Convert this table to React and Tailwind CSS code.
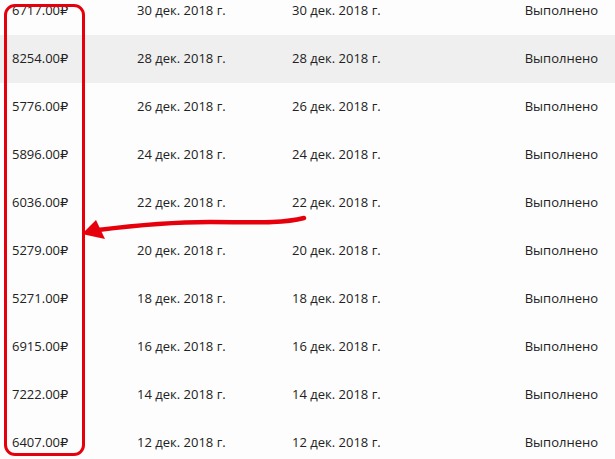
import React from "react";

const rows = [
  { sum: "6717.00₽", date: "30 дек. 2018 г." },
  { sum: "8254.00₽", date: "28 дек. 2018 г.", active: true },
  { sum: "5776.00₽", date: "26 дек. 2018 г." },
  { sum: "5896.00₽", date: "24 дек. 2018 г." },
  { sum: "6036.00₽", date: "22 дек. 2018 г." },
  { sum: "5279.00₽", date: "20 дек. 2018 г." },
  { sum: "5271.00₽", date: "18 дек. 2018 г." },
  { sum: "6915.00₽", date: "16 дек. 2018 г." },
  { sum: "7222.00₽", date: "14 дек. 2018 г." },
  { sum: "6407.00₽", date: "12 дек. 2018 г." },
];

const App = () => {
  return (
    <div
      className="relative w-[615px] h-[459px] overflow-hidden bg-[#fdfdfd] text-[#222] text-[13px]"
      style={{ fontFamily: '"Open Sans", "DejaVu Sans", sans-serif' }}
    >
      <div className="-mt-[13px]">
        {rows.map((row) => (
          <div
            key={row.sum}
            className={
              "flex items-center h-[48px] pl-[12px] pr-[17px] " +
              (row.active ? "bg-[#efefef]" : "")
            }
          >
            <div className="w-[125px]">{row.sum}</div>
            <div className="w-[155px]">{row.date}</div>
            <div className="w-[160px]">{row.date}</div>
            <div className="flex-1 text-right">Выполнено</div>
          </div>
        ))}
      </div>

      {/* red frame around the sums */}
      <div className="absolute left-[4px] top-[4px] w-[81px] h-[452px] border-[3.5px] border-[#e6000c] rounded-[11px]" />

      {/* arrow */}
      <svg
        className="absolute left-0 top-0"
        width="615"
        height="459"
        viewBox="0 0 615 459"
      >
        <path
          d="M304 218 C 280 224, 250 222, 210 222 C 170 222, 130 226, 98 230"
          fill="none"
          stroke="#e6000c"
          strokeWidth="4.5"
          strokeLinecap="round"
        />
        <polygon points="82,234 96,220 105,239" fill="#e6000c" />
      </svg>
    </div>
  );
};

export default App;
